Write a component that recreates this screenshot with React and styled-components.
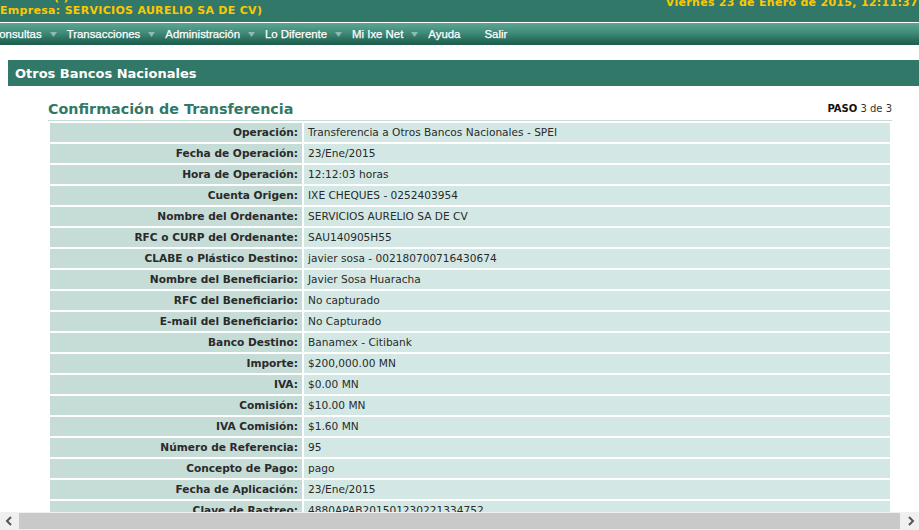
import React from "react";
import styled, { createGlobalStyle } from "styled-components";

const Global = createGlobalStyle`
  html, body { margin: 0; padding: 0; background: #fff; overflow: hidden; }
  body { font-family: "DejaVu Sans", Verdana, sans-serif; }
`;

const Page = styled.div`
  width: 919px;
  height: 530px;
  display: flex;
  flex-direction: column;
  overflow: hidden;
`;

const Viewport = styled.div`
  flex: 1;
  overflow: hidden;
  min-height: 0;
`;

const TopBar = styled.div`
  height: 22px;
  background: #327868;
  display: flex;
  justify-content: space-between;
  overflow: hidden;
  font-family: "DejaVu Sans", Verdana, sans-serif;
  font-weight: bold;
  font-size: 11px;
  letter-spacing: 0.3px;
  color: #fcc800;
`;

const TopLeft = styled.div`
  display: flex;
  flex-direction: column;
  margin-top: -7px;
  line-height: 13px;
  white-space: nowrap;
`;

const Sliver = styled.span`
  padding-left: 54px;
  height: 11px;
  overflow: hidden;
  line-height: 9px;
`;

const TopRight = styled.div`
  margin-top: -4px;
  margin-right: 1px;
  line-height: 13px;
  white-space: nowrap;
  letter-spacing: 0.3px;
`;

const MenuBar = styled.div`
  margin-top: 1px;
  height: 22px;
  background: linear-gradient(#5aa593, #3f8a78 45%, #2b6f5e 75%, #1f5c4c);
  display: flex;
  align-items: center;
  font-family: "Liberation Sans", Arial, sans-serif;
  font-size: 11.4px;
  color: #fff;
  -webkit-text-stroke: 0.25px #fff;
  white-space: nowrap;
`;

const MenuItem = styled.span`
  display: flex;
  align-items: center;
  margin-left: ${(p) => (p.$first ? "-9px" : "0")};
  margin-right: ${(p) => p.$gap || 0}px;
`;

const Arrow = styled.svg`
  width: 7px;
  height: 5px;
  margin-left: 8px;
  flex: none;
`;

const Section = styled.div`
  margin: 15px 0 0 8px;
  width: 940px;
  height: 26px;
  background: #317868;
  color: #fff;
  font-weight: bold;
  font-size: 13px;
  display: flex;
  align-items: center;
  padding-left: 7px;
  box-sizing: border-box;
`;

const Content = styled.div`
  margin: 12px 0 0 48px;
  width: 844px;
`;

const TitleRow = styled.div`
  display: flex;
  justify-content: space-between;
  align-items: flex-end;
  border-bottom: 1px solid #c5dcd7;
  padding-bottom: 1px;
`;

const Title = styled.h1`
  margin: 0;
  padding-top: 2px;
  font-size: 14.3px;
  font-weight: bold;
  color: #317868;
  line-height: 19px;
`;

const Step = styled.span`
  font-size: 10px;
  color: #333;
  line-height: 14px;
  padding-bottom: 3px;
  b { color: #111; }
`;

const Table = styled.table`
  width: 844px;
  border-spacing: 2px;
  font-size: 10.6px;
  line-height: 13px;
  color: #2a2a2a;
`;

const Label = styled.td`
  width: 244px;
  height: 19px;
  padding: 0 4px;
  text-align: right;
  background: #c5dcd7;
  font-weight: bold;
  white-space: nowrap;
`;

const Value = styled.td`
  height: 19px;
  padding: 0 4px;
  background: #d3e8e4;
  white-space: nowrap;
`;

const ScrollBar = styled.div`
  height: 18px;
  flex: none;
  display: flex;
  align-items: stretch;
  background: #f0f0f0;
`;

const ScrollBtn = styled.div`
  width: 17px;
  display: flex;
  align-items: center;
  justify-content: center;
`;

const Thumb = styled.div`
  flex: 1;
  margin: 1px 2px;
  background: #c9c9c9;
`;

const rows = [
  ["Operación:", "Transferencia a Otros Bancos Nacionales - SPEI"],
  ["Fecha de Operación:", "23/Ene/2015"],
  ["Hora de Operación:", "12:12:03 horas"],
  ["Cuenta Origen:", "IXE CHEQUES - 0252403954"],
  ["Nombre del Ordenante:", "SERVICIOS AURELIO SA DE CV"],
  ["RFC o CURP del Ordenante:", "SAU140905H55"],
  ["CLABE o Plástico Destino:", "javier sosa - 002180700716430674"],
  ["Nombre del Beneficiario:", "Javier Sosa Huaracha"],
  ["RFC del Beneficiario:", "No capturado"],
  ["E-mail del Beneficiario:", "No Capturado"],
  ["Banco Destino:", "Banamex - Citibank"],
  ["Importe:", "$200,000.00 MN"],
  ["IVA:", "$0.00 MN"],
  ["Comisión:", "$10.00 MN"],
  ["IVA Comisión:", "$1.60 MN"],
  ["Número de Referencia:", "95"],
  ["Concepto de Pago:", "pago"],
  ["Fecha de Aplicación:", "23/Ene/2015"],
  ["Clave de Rastreo:", "4880APAB201501230221334752"],
  ["Estado:", "Enviada"],
];

const menu = [
  { t: "Consultas", a: true, gap: 10, first: true },
  { t: "Transacciones", a: true, gap: 10 },
  { t: "Administración", a: true, gap: 10 },
  { t: "Lo Diferente", a: true, gap: 10 },
  { t: "Mi Ixe Net", a: true, gap: 10 },
  { t: "Ayuda", a: false, gap: 24 },
  { t: "Salir", a: false, gap: 0 },
];

export default function App() {
  return (
    <>
      <Global />
      <Page>
        <Viewport>
          <TopBar>
            <TopLeft>
              <Sliver>( )</Sliver>
              <span>Empresa: SERVICIOS AURELIO SA DE CV)</span>
            </TopLeft>
            <TopRight>Viernes 23 de Enero de 2015, 12:11:37</TopRight>
          </TopBar>
          <MenuBar>
            {menu.map((m) => (
              <MenuItem key={m.t} $first={m.first} $gap={m.gap}>
                {m.t}
                {m.a && (
                  <Arrow viewBox="0 0 7 5">
                    <path d="M0 0 H7 L3.5 5 Z" fill="#8dbbb0" />
                  </Arrow>
                )}
              </MenuItem>
            ))}
          </MenuBar>
          <Section>Otros Bancos Nacionales</Section>
          <Content>
            <TitleRow>
              <Title>Confirmación de Transferencia</Title>
              <Step>
                <b>PASO</b> 3 de 3
              </Step>
            </TitleRow>
            <Table>
              <tbody>
                {rows.map(([l, v]) => (
                  <tr key={l}>
                    <Label>{l}</Label>
                    <Value>{v}</Value>
                  </tr>
                ))}
              </tbody>
            </Table>
          </Content>
        </Viewport>
        <ScrollBar>
          <ScrollBtn>
            <svg width="8" height="10" viewBox="0 0 8 10">
              <path d="M6 1 L2 5 L6 9" stroke="#555" strokeWidth="2" fill="none" />
            </svg>
          </ScrollBtn>
          <Thumb />
          <ScrollBtn>
            <svg width="8" height="10" viewBox="0 0 8 10">
              <path d="M2 1 L6 5 L2 9" stroke="#555" strokeWidth="2" fill="none" />
            </svg>
          </ScrollBtn>
        </ScrollBar>
      </Page>
    </>
  );
}
